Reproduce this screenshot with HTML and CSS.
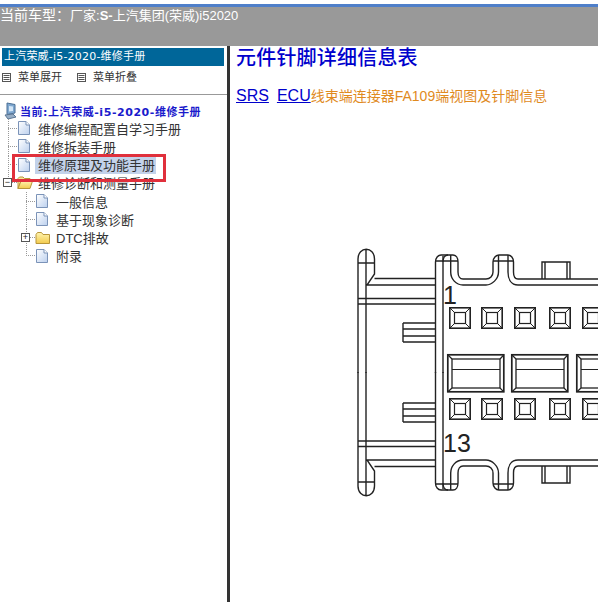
FILE: index.html
```html
<!DOCTYPE html>
<html lang="zh-CN">
<head>
  <meta charset="UTF-8" />
  <title>元件针脚详细信息表</title>
  <link rel="stylesheet" href="styles.css">
</head>

<body>
  <svg class="defs" width="0" height="0">
    <defs>
      <linearGradient id="docFill" x1="0" y1="0" x2="1" y2="1">
        <stop offset="0" stop-color="#ffffff"/>
        <stop offset="1" stop-color="#bcd0ee"/>
      </linearGradient>
      <linearGradient id="folderFill" x1="0" y1="0" x2="0" y2="1">
        <stop offset="0" stop-color="#fff4b0"/>
        <stop offset="1" stop-color="#f2cb4e"/>
      </linearGradient>
      <symbol id="doc" viewBox="0 0 14 16">
        <path d="M1.5 1.5H9L12.5 5V14.5H1.5Z" fill="url(#docFill)" stroke="#7b93b8"/>
        <path d="M9 1.5V5H12.5" fill="#fff" stroke="#7b93b8"/>
      </symbol>
      <symbol id="folder" viewBox="0 0 16 14">
        <path d="M1 3.5L2.5 1.5H6.5L8 3.5H14.5V12.5H1Z" fill="url(#folderFill)" stroke="#b8963a"/>
      </symbol>
      <symbol id="folderOpen" viewBox="0 0 16 14">
        <path d="M1 2.5L2.5 1H6L7.5 2.5H13V5H4L1 12.5Z" fill="#f8e69a" stroke="#b8963a"/>
        <path d="M1 12.5L4 5H15.5L13 12.5Z" fill="url(#folderFill)" stroke="#b8963a"/>
      </symbol>
      <symbol id="box" viewBox="0 0 9 9">
        <rect x="0.5" y="0.5" width="8" height="8" fill="#fff" stroke="#555"/>
        <path d="M1.5 2.5H7.5M1.5 4.5H7.5M1.5 6.5H7.5" stroke="#555"/>
      </symbol>
      <g id="pin">
        <rect x="0.8" y="0.8" width="20.4" height="20.4" fill="#fff" stroke="#222" stroke-width="1.6"/>
        <rect x="5.5" y="5.5" width="11" height="11" fill="none" stroke="#222" stroke-width="1.2"/>
        <path d="M1 1L5.5 5.5M21 1L16.5 5.5M1 21L5.5 16.5M21 21L16.5 16.5" stroke="#222"/>
      </g>
      <g id="win">
        <rect x="0.8" y="0.8" width="56" height="37" fill="#fff" stroke="#222" stroke-width="1.7"/>
        <rect x="5" y="5" width="48" height="29" fill="none" stroke="#222" stroke-width="1.3"/>
        <path d="M1 1L5 5M56.8 1L53 5M1 37.8L5 34M56.8 37.8L53 34M5 15.5H53" fill="none" stroke="#222" stroke-width="1.2"/>
      </g>
      <g id="half">
        <path d="M358 373V259C358 246 374.5 246 374.5 259V274L367 285H435M374.5 278.5H435M366 373V250M358 263H374.5M358 298.5H435M358 304H435"/>
        <path d="M403 323H435M403 329H435M403 336H435M403 342H435M403 323V342"/>
        <path d="M443 262C443 258 445 255 448 255H453C456 255 458 258 458 262V272C458 276 460 279 463 279H486C490 279 493 276 493 272V262C493 258 496 255 499 255H508C511 255 513.5 258 513.5 262V272C513.5 276 515 279 518 279H598"/>
        <path d="M450.7 255V272C450.7 279 456 285 463 285H486C492 285 498.5 279 498.5 272V255M508 255V272C508 279 511 285 518 285H598"/>
        <path d="M435.5 373V262C435.5 258 438 255 441 255H448M435.5 261H458M493 261H513.5M443 373V256"/>
        <path d="M542 279V262H570V279M545 262V279M567 262V279"/>
      </g>
    </defs>
  </svg>

  <div class="top-edge"></div>
  <header class="car-bar"><span class="car-label">当前车型：</span>厂家:<b>S-</b>上汽集团(荣威)i52020</header>

  <div class="main">
    <aside class="side">
      <div class="side-title">上汽荣威-i5-2020-维修手册</div>
      <div class="menu-tools">
        <span class="tool"><svg class="tool-icon"><use href="#box"/></svg>菜单展开</span>
        <span class="tool"><svg class="tool-icon"><use href="#box"/></svg>菜单折叠</span>
      </div>

      <div class="tree">
        <div class="root">
          <svg class="root-icon" viewBox="0 0 14 18">
            <path d="M4 1L12 2.5V11L4 12.5Z" fill="#7fa8d0" stroke="#4a6f96"/>
            <path d="M6 4L10 4.5V9L6 9.5Z" fill="#d3e6f7"/>
            <path d="M2 13L10 12L13 15L5 17Z" fill="#97aec6" stroke="#5a7694"/>
          </svg>
          当前:上汽荣威-i5-2020-维修手册
        </div>
        <div class="row"><span class="branch"></span><svg class="icon"><use href="#doc"/></svg><span>维修编程配置自学习手册</span></div>
        <div class="row"><span class="branch"></span><svg class="icon"><use href="#doc"/></svg><span>维修拆装手册</span></div>
        <div class="row"><span class="branch"></span><svg class="icon"><use href="#doc"/></svg><span class="selected">维修原理及功能手册</span></div>
        <div class="row"><span class="branch branch-last"></span><svg class="icon icon-folder"><use href="#folderOpen"/></svg><span>维修诊断和测量手册</span><span class="toggle">−</span></div>
        <div class="row sub"><span class="branch"></span><svg class="icon"><use href="#doc"/></svg><span>一般信息</span></div>
        <div class="row sub"><span class="branch"></span><svg class="icon"><use href="#doc"/></svg><span>基于现象诊断</span></div>
        <div class="row sub"><span class="branch"></span><svg class="icon icon-folder"><use href="#folder"/></svg><span>DTC排故</span><span class="toggle">+</span></div>
        <div class="row sub"><span class="branch branch-last"></span><svg class="icon"><use href="#doc"/></svg><span>附录</span></div>
        <div class="red-mark"></div>
      </div>
    </aside>

    <div class="splitter"></div>

    <main class="content">
      <h1>元件针脚详细信息表</h1>
      <p class="crumbs"><a href="#">SRS</a><a href="#">ECU</a><span class="crumb-title">线束端连接器FA109端视图及针脚信息</span></p>

      <svg class="connector" viewBox="230 240 368 262" width="368" height="262">
        <g fill="none" stroke="#222" stroke-width="1.4">
          <use href="#half"/>
          <use href="#half" transform="matrix(1 0 0 -1 0 745)"/>
        </g>
        <use href="#pin" x="449" y="307"/>
        <use href="#pin" x="481" y="307"/>
        <use href="#pin" x="514" y="307"/>
        <use href="#pin" x="549" y="307"/>
        <use href="#pin" x="582" y="307"/>
        <use href="#win" x="447" y="354"/>
        <use href="#win" x="511" y="354"/>
        <use href="#win" x="576" y="354"/>
        <use href="#pin" x="449" y="398"/>
        <use href="#pin" x="481" y="398"/>
        <use href="#pin" x="514" y="398"/>
        <use href="#pin" x="549" y="398"/>
        <use href="#pin" x="582" y="398"/>
        <text class="pin-no" x="443" y="304">1</text>
        <text class="pin-no" x="443" y="452">13</text>
      </svg>
    </main>
  </div>
</body>
</html>
```

FILE: styles.css
```css
html,
body {
  margin: 0;
  height: 100%;
  overflow: hidden;
  background: #fff;
}

body {
  display: flex;
  flex-direction: column;
  font-family: "Liberation Sans", "Noto Sans CJK SC", sans-serif;
}

.defs {
  display: block;
  height: 0;
}

.top-edge {
  height: 3px;
  margin-top: 4px;
  background: #4f7fc9;
  flex: none;
}

.car-bar {
  height: 39px;
  flex: none;
  background: #999;
  color: #fff;
  font-size: 13px;
  line-height: 16px;
  white-space: pre;
}

.car-label {
  font-size: 14px;
}

.main {
  flex: 1;
  display: flex;
  min-height: 0;
}

.side {
  width: 227px;
  flex: none;
  padding-top: 2px;
  box-sizing: border-box;
}

.side-title {
  height: 18px;
  margin: 0 3px 0 2px;
  padding-left: 2px;
  background: #006699;
  color: #fff;
  font-family: "DejaVu Sans", "Noto Sans CJK SC", sans-serif;
  font-size: 11px;
  letter-spacing: 0.2px;
  line-height: 18px;
}

.menu-tools {
  height: 28px;
  display: flex;
  gap: 15px;
  padding-left: 2px;
  border-bottom: 1px solid #999;
  font-size: 11px;
  line-height: 22px;
  color: #333;
}

.tool {
  display: flex;
  align-items: center;
  height: 22px;
}

.tool-icon {
  width: 9px;
  height: 9px;
  margin-right: 7px;
}

.tree {
  position: relative;
  padding-top: 7px;
  font-size: 13px;
  color: #333;
}

.root {
  display: flex;
  align-items: center;
  height: 17px;
  padding-left: 3px;
  font-family: "DejaVu Sans", "Noto Sans CJK SC", sans-serif;
  font-size: 11px;
  font-weight: bold;
  letter-spacing: 0.55px;
  color: #1a1acc;
}

.root-icon {
  width: 14px;
  height: 18px;
  margin-right: 3px;
}

.row {
  position: relative;
  display: flex;
  align-items: center;
  height: 18.25px;
  padding-left: 8px;
  white-space: nowrap;
}

.row.sub {
  padding-left: 26px;
}

.branch {
  align-self: stretch;
  width: 9px;
  flex: none;
  background:
    linear-gradient(#999 50%, transparent 50%) 0 0 / 1px 2px repeat-y,
    linear-gradient(90deg, #999 50%, transparent 50%) 0 50% / 2px 1px repeat-x;
}

.branch-last {
  height: 9px;
  align-self: flex-start;
  background:
    linear-gradient(#999 50%, transparent 50%) 0 0 / 1px 2px repeat-y,
    linear-gradient(90deg, #999 50%, transparent 50%) 0 100% / 2px 1px repeat-x;
}

.icon {
  width: 14px;
  height: 16px;
  flex: none;
  margin-right: 7px;
}

.icon-folder {
  width: 16px;
  margin-right: 5px;
}

.selected {
  background: #c3d2ea;
  margin-left: -3px;
  padding: 0 1px 0 3px;
}

.toggle {
  position: absolute;
  left: 3px;
  top: 4px;
  width: 9px;
  height: 9px;
  box-sizing: border-box;
  border: 1px solid #555;
  background: #fff;
  color: #222;
  font-size: 9px;
  line-height: 7px;
  text-align: center;
}

.sub .toggle {
  left: 21px;
}

.red-mark {
  position: absolute;
  left: 12px;
  top: 59px;
  width: 154px;
  height: 28px;
  box-sizing: border-box;
  border: 3px solid #e0303c;
}

.splitter {
  width: 3px;
  flex: none;
  background: #333;
}

.content {
  flex: 1;
  min-width: 0;
  overflow: hidden;
}

h1 {
  margin: 0;
  padding: 0 0 0 6px;
  font-size: 20px;
  line-height: 24px;
  font-weight: 500;
  letter-spacing: 0.2px;
  color: #0000cc;
}

.crumbs {
  margin: 16px 0 0 6px;
  height: 20px;
  font-size: 16px;
  line-height: 20px;
  white-space: nowrap;
}

.crumbs a {
  color: #0000cc;
  margin-right: 8px;
}

.crumbs a:last-of-type {
  margin-right: 0;
}

.crumb-title {
  font-size: 14px;
  color: #e08a1e;
}

.connector {
  display: block;
  margin-top: 134px;
}

.pin-no {
  font-size: 25px;
  fill: #222;
}
```
